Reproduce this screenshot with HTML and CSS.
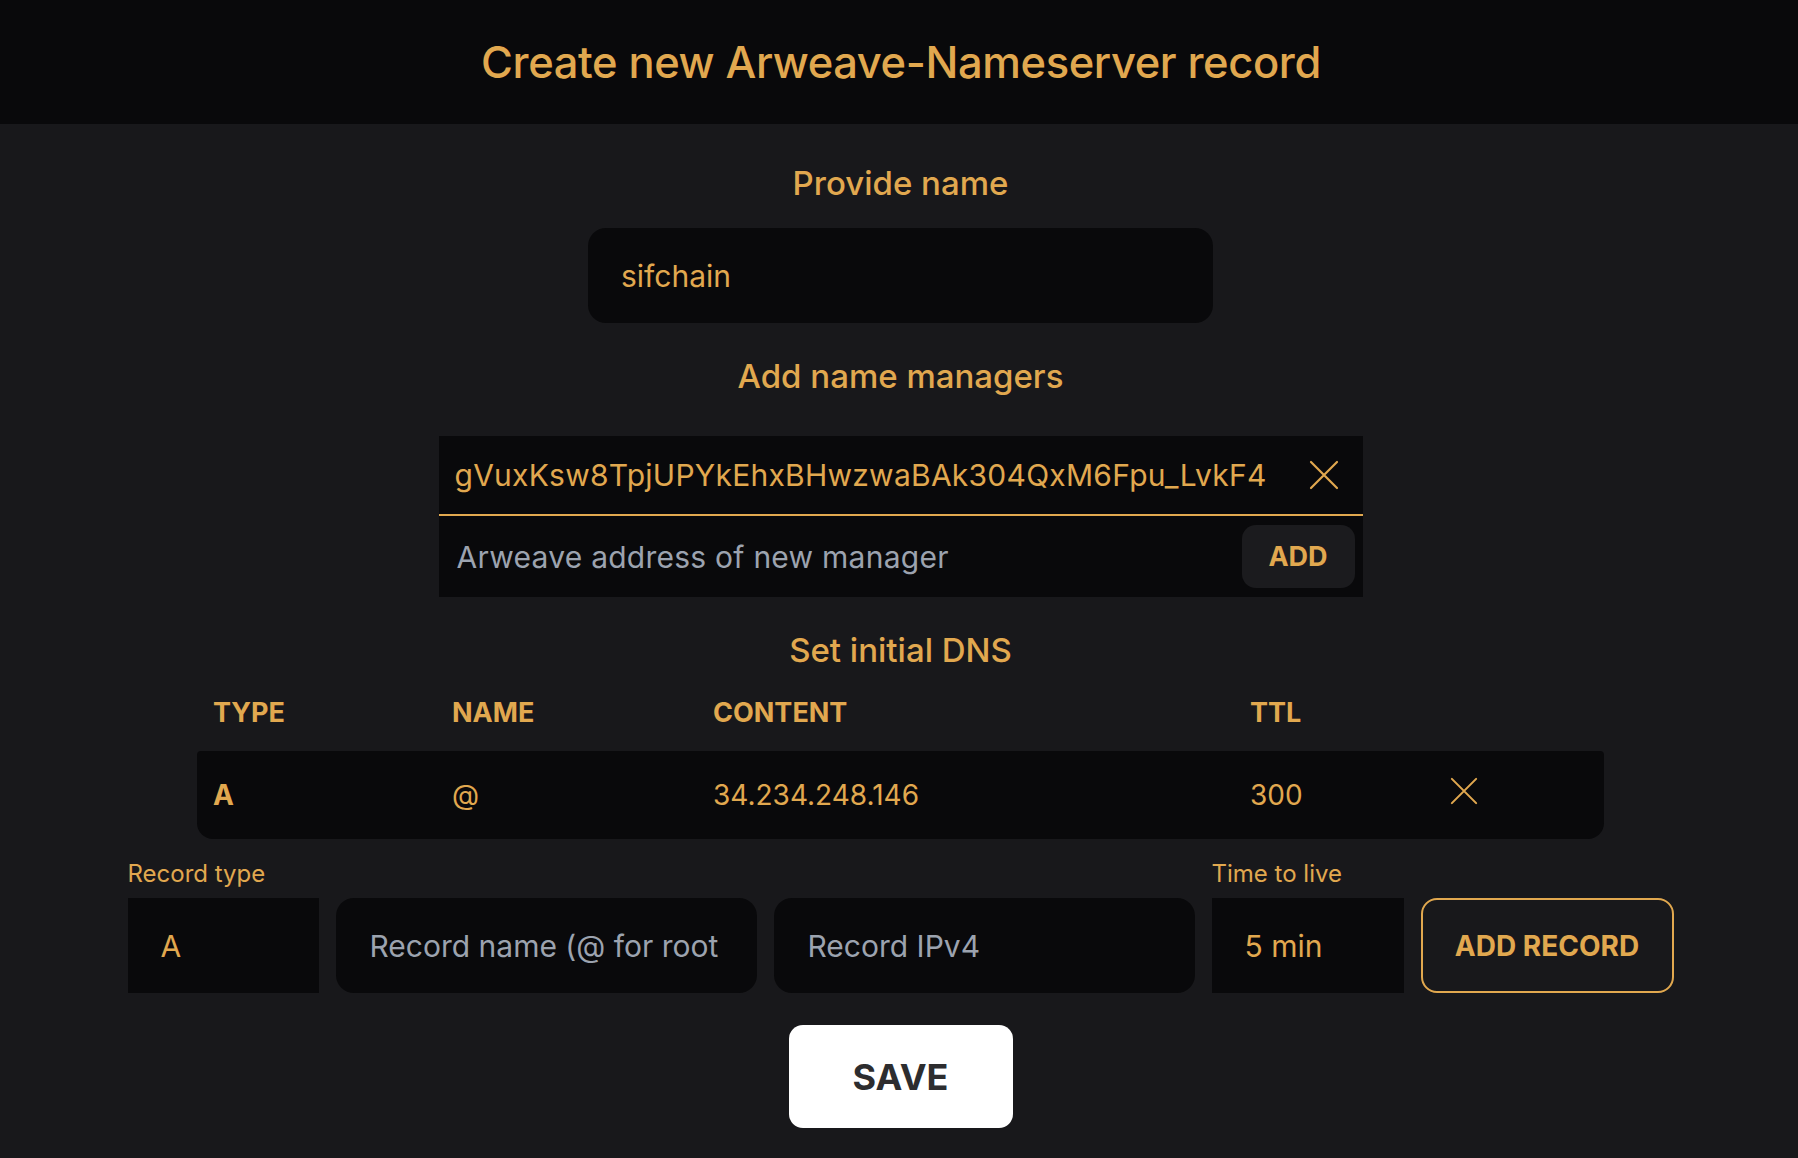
FILE: index.html
```html
<!DOCTYPE html>
<html lang="en">
<head>
<meta charset="utf-8">
<title>Create new Arweave-Nameserver record</title>
<link rel="stylesheet" href="styles.css">
</head>
<body>
<header class="topbar">
  <h1 class="title">Create new Arweave-Nameserver record</h1>
</header>
<main class="page">
  <h2 class="section-title first">Provide name</h2>
  <div class="name-input">sifchain</div>

  <h2 class="section-title">Add name managers</h2>
  <div class="managers">
    <div class="manager-row">
      <span class="manager-addr">gVuxKsw8TpjUPYkEhxBHwzwaBAk304QxM6Fpu_LvkF4</span>
      <svg class="close-icon" width="30" height="30" viewBox="0 0 30 30"><path d="M2 2 L28 28 M28 2 L2 28" stroke="currentColor" stroke-width="2.2" fill="none" stroke-linecap="round"/></svg>
    </div>
    <div class="manager-new">
      <span class="placeholder">Arweave address of new manager</span>
      <button class="add-btn">ADD</button>
    </div>
  </div>

  <h2 class="section-title dns">Set initial DNS</h2>
  <div class="dns-table">
    <div class="dns-head">
      <span>TYPE</span><span>NAME</span><span>CONTENT</span><span>TTL</span><span></span>
    </div>
    <div class="dns-row">
      <span class="bold">A</span><span>@</span><span>34.234.248.146</span><span>300</span>
      <span><svg class="close-icon small" width="28" height="28" viewBox="0 0 30 30"><path d="M2 2 L28 28 M28 2 L2 28" stroke="currentColor" stroke-width="2.2" fill="none" stroke-linecap="round"/></svg></span>
    </div>
  </div>

  <div class="record-form">
    <label class="field-label">Record type</label>
    <span></span>
    <span></span>
    <label class="field-label">Time to live</label>
    <span></span>
    <div class="field select gold">A</div>
    <div class="field rounded muted">Record name (@ for root</div>
    <div class="field rounded muted">Record IPv4</div>
    <div class="field select gold">5 min</div>
    <button class="add-record">ADD RECORD</button>
  </div>

  <button class="save-btn">SAVE</button>
</main>
</body>
</html>
```

FILE: styles.css
```css
* { box-sizing: border-box; }
html, body { margin: 0; padding: 0; }
body {
  background: #18181b;
  color: #e1a84f;
  font-family: Inter, "Noto Sans", "Liberation Sans", sans-serif;
  min-height: 1158px;
}
.topbar {
  background: #09090b;
  height: 124px;
  display: flex;
  align-items: center;
  justify-content: center;
  padding-left: 4px;
}
.title {
  margin: 0;
  font-size: 43.5px;
  font-weight: 500;
  letter-spacing: -0.4px;
  color: #e1a84f;
}
.page {
  display: flex;
  flex-direction: column;
  align-items: center;
  padding-left: 3px;
}
.section-title {
  margin: 33px 0 0;
  font-size: 33px;
  font-weight: 500;
  line-height: 40px;
  color: #e1a84f;
}
.section-title.first { margin-top: 39px; }
.name-input {
  margin-top: 25px;
  width: 625px;
  height: 95px;
  background: #09090b;
  border-radius: 18px;
  display: flex;
  align-items: center;
  padding-left: 33px;
  font-size: 30px;
}
.managers {
  margin-top: 40px;
  width: 924px;
  background: #09090b;
}
.manager-row {
  height: 80px;
  border-bottom: 2px solid #e1a84f;
  display: flex;
  align-items: center;
  justify-content: space-between;
  padding: 0 24px 0 16px;
}
.manager-addr { font-size: 30px; letter-spacing: 0.25px; }
.close-icon { color: #e1a84f; display: block; }
.manager-new {
  height: 81px;
  display: flex;
  align-items: center;
  justify-content: space-between;
  padding: 0 8px 0 18px;
}
.placeholder {
  font-size: 30px;
  letter-spacing: 0.25px;
  color: #9ca3af;
}
.add-btn {
  width: 113px;
  height: 63px;
  background: #1b1b1e;
  border: 0;
  border-radius: 14px;
  color: #e1a84f;
  font-family: inherit;
  font-size: 27px;
  font-weight: 700;
}
.section-title.dns { margin-top: 33px; }
.dns-table {
  width: 1407px;
  margin-top: 4px;
}
.dns-head, .dns-row {
  display: grid;
  grid-template-columns: 239px 261px 537px 200px 1fr;
  padding-left: 16px;
  align-items: center;
}
.dns-head {
  height: 77px;
  font-size: 27px;
  font-weight: 700;
}
.dns-row {
  height: 88px;
  background: #09090b;
  border-radius: 4px 4px 16px 16px;
  font-size: 28px;
}
.dns-row .bold { font-weight: 700; }
.close-icon.small { margin-top: -8px; }
.record-form {
  margin-top: 21px;
  display: grid;
  grid-template-columns: 191px 421px 421px 192px 253px;
  column-gap: 17px;
  row-gap: 10px;
}
.field-label {
  font-size: 24px;
  line-height: 28px;
  color: #e1a84f;
}
.field {
  height: 95px;
  background: #09090b;
  display: flex;
  align-items: center;
  font-size: 30px;
  padding-left: 33px;
}
.field.rounded { border-radius: 18px; padding-left: 34px; }
.field.muted { color: #9ca3af; }
.field.gold { color: #e1a84f; }
.add-record {
  height: 95px;
  background: transparent;
  border: 2px solid #e1a84f;
  border-radius: 16px;
  color: #e1a84f;
  font-family: inherit;
  font-size: 28px;
  font-weight: 700;
}
.save-btn {
  margin-top: 32px;
  width: 224px;
  height: 103px;
  background: #ffffff;
  border: 0;
  border-radius: 14px;
  color: #2d2d2f;
  font-family: inherit;
  font-size: 36px;
  font-weight: 700;
}
```
